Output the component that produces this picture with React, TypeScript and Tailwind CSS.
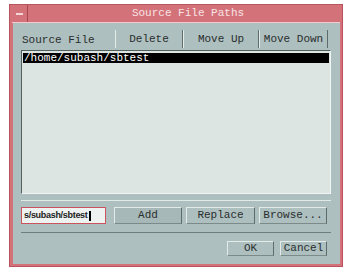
import React from "react";

const mono = "font-['Liberation_Mono',monospace] text-[11px] text-[#2a2e2e]";

const BarButton: React.FC<{ label: string; w: string }> = ({ label, w }) => (
  <div
    className={`${w} h-full flex items-center justify-center border-l border-l-[#e4ecea] border-r border-r-[#5d6b6b] ${mono}`}
  >
    {label}
  </div>
);

const PushButton: React.FC<{ label: string; w: string; dark?: boolean }> = ({
  label,
  w,
  dark,
}) => (
  <div
    className={`${w} h-full flex items-center justify-center border border-t-[#e3ebe9] border-l-[#e3ebe9] border-b-[#7c8a8a] border-r-[#5d6b6b] ${
      dark ? "bg-[#a6b8b8]" : "bg-[#adbfbf]"
    } ${mono}`}
  >
    {label}
  </div>
);

const App: React.FC = () => {
  return (
    <div className="w-[351px] h-[272px] bg-white pt-[4px] pl-[9px]">
      {/* window frame */}
      <div className="w-[334px] h-[263px] bg-[#d4727a] border border-[#b9545d] flex flex-col">
        {/* title bar */}
        <div className="h-[18px] flex items-stretch mx-[2px] border-b border-b-[#f2c9cc]">
          <div className="w-[16px] border-r border-r-[#a9464f] flex items-center justify-center">
            <div className="w-[7px] h-[2px] bg-[#f3d6d8]" />
          </div>
          <div className="flex-1 flex items-center justify-center pl-[8px] font-['Liberation_Mono',monospace] text-[11px] text-[#f7e4e5]">
            Source File Paths
          </div>
        </div>

        {/* content */}
        <div className="ml-[3px] mr-[2px] h-[241px] bg-[#adbfbf] pl-[8px] pr-[9px] flex flex-col">
          {/* top row */}
          <div className="mt-[7px] h-[18px] flex items-stretch">
            <div className={`w-[94px] flex items-end pl-[1px] ${mono}`}>
              Source File
            </div>
            <BarButton label="Delete" w="w-[68px]" />
            <BarButton label="Move Up" w="w-[76px]" />
            <BarButton label="Move Down" w="w-[69px]" />
          </div>

          {/* list */}
          <div className="mt-[2px] h-[144px] w-[310px] bg-[#dde5e2] border-t border-l border-t-[#55615f] border-l-[#55615f] border-r border-b border-r-[#f0f4f2] border-b-[#f0f4f2] pt-[2px] px-[1px]">
            <div className="h-[10px] bg-black flex items-center pl-[1px] font-['Liberation_Mono',monospace] text-[11px] text-white leading-none">
              /home/subash/sbtest
            </div>
          </div>

          {/* separator */}
          <div className="mt-[6px] h-[1px] w-[310px] bg-[#e2eae8]" />

          {/* input row */}
          <div className="mt-[6px] h-[17px] flex items-stretch">
            <div className="w-[85px] h-full border border-[#c9545e] bg-[#eef2f0] flex items-center pl-[2px] overflow-hidden">
              <span className="font-['Liberation_Sans',sans-serif] text-[9px] font-bold text-[#222] tracking-[-0.3px] whitespace-nowrap leading-none">
                s/subash/sbtest
              </span>
              <span className="ml-[1px] w-[2px] h-[10px] bg-black" />
            </div>
            <div className="ml-[8px]" />
            <PushButton label="Add" w="w-[68px]" dark />
            <div className="ml-[4px]" />
            <PushButton label="Replace" w="w-[69px]" />
            <div className="ml-[4px]" />
            <PushButton label="Browse..." w="w-[68px]" />
          </div>

          {/* separator */}
          <div className="mt-[8px] h-[1px] w-[310px] bg-[#6f7d7d]" />

          {/* ok / cancel */}
          <div className="mt-[8px] h-[15px] w-[306px] flex justify-end gap-[6px]">
            <PushButton label="OK" w="w-[47px]" />
            <PushButton label="Cancel" w="w-[47px]" />
          </div>
        </div>
      </div>
    </div>
  );
};

export default App;
